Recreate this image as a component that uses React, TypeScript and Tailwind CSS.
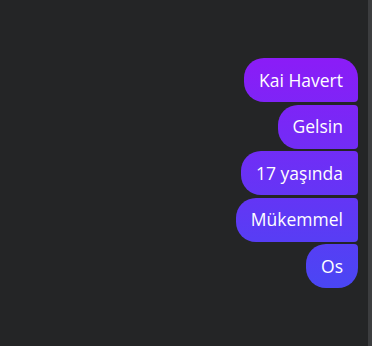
const messages = [
  { text: "Kai Havert", shape: "rounded-[20px] rounded-br-[4px]" },
  { text: "Gelsin", shape: "rounded-[20px] rounded-tr-[4px] rounded-br-[4px]" },
  { text: "17 yaşında", shape: "rounded-[20px] rounded-tr-[4px] rounded-br-[4px]" },
  { text: "Mükemmel", shape: "rounded-[20px] rounded-tr-[4px] rounded-br-[4px]" },
  { text: "Os", shape: "rounded-[20px] rounded-tr-[4px]" },
];

const App = () => {
  return (
    <div className="flex h-[346px] w-[372px] border-r-4 border-[#3c3d3f] bg-[#242526] font-['Open_Sans',sans-serif]">
      <div className="flex w-full flex-col items-end gap-[2.5px] pr-[10px] pt-[58px]">
        {messages.map((m) => (
          <div
            key={m.text}
            className={`flex h-[44px] items-center bg-[linear-gradient(180deg,#8b1cf7_17%,#4a46f4_83%)] bg-fixed px-[15px] text-[17.5px] text-white ${m.shape}`}
          >
            {m.text}
          </div>
        ))}
      </div>
    </div>
  );
};

export default App;
